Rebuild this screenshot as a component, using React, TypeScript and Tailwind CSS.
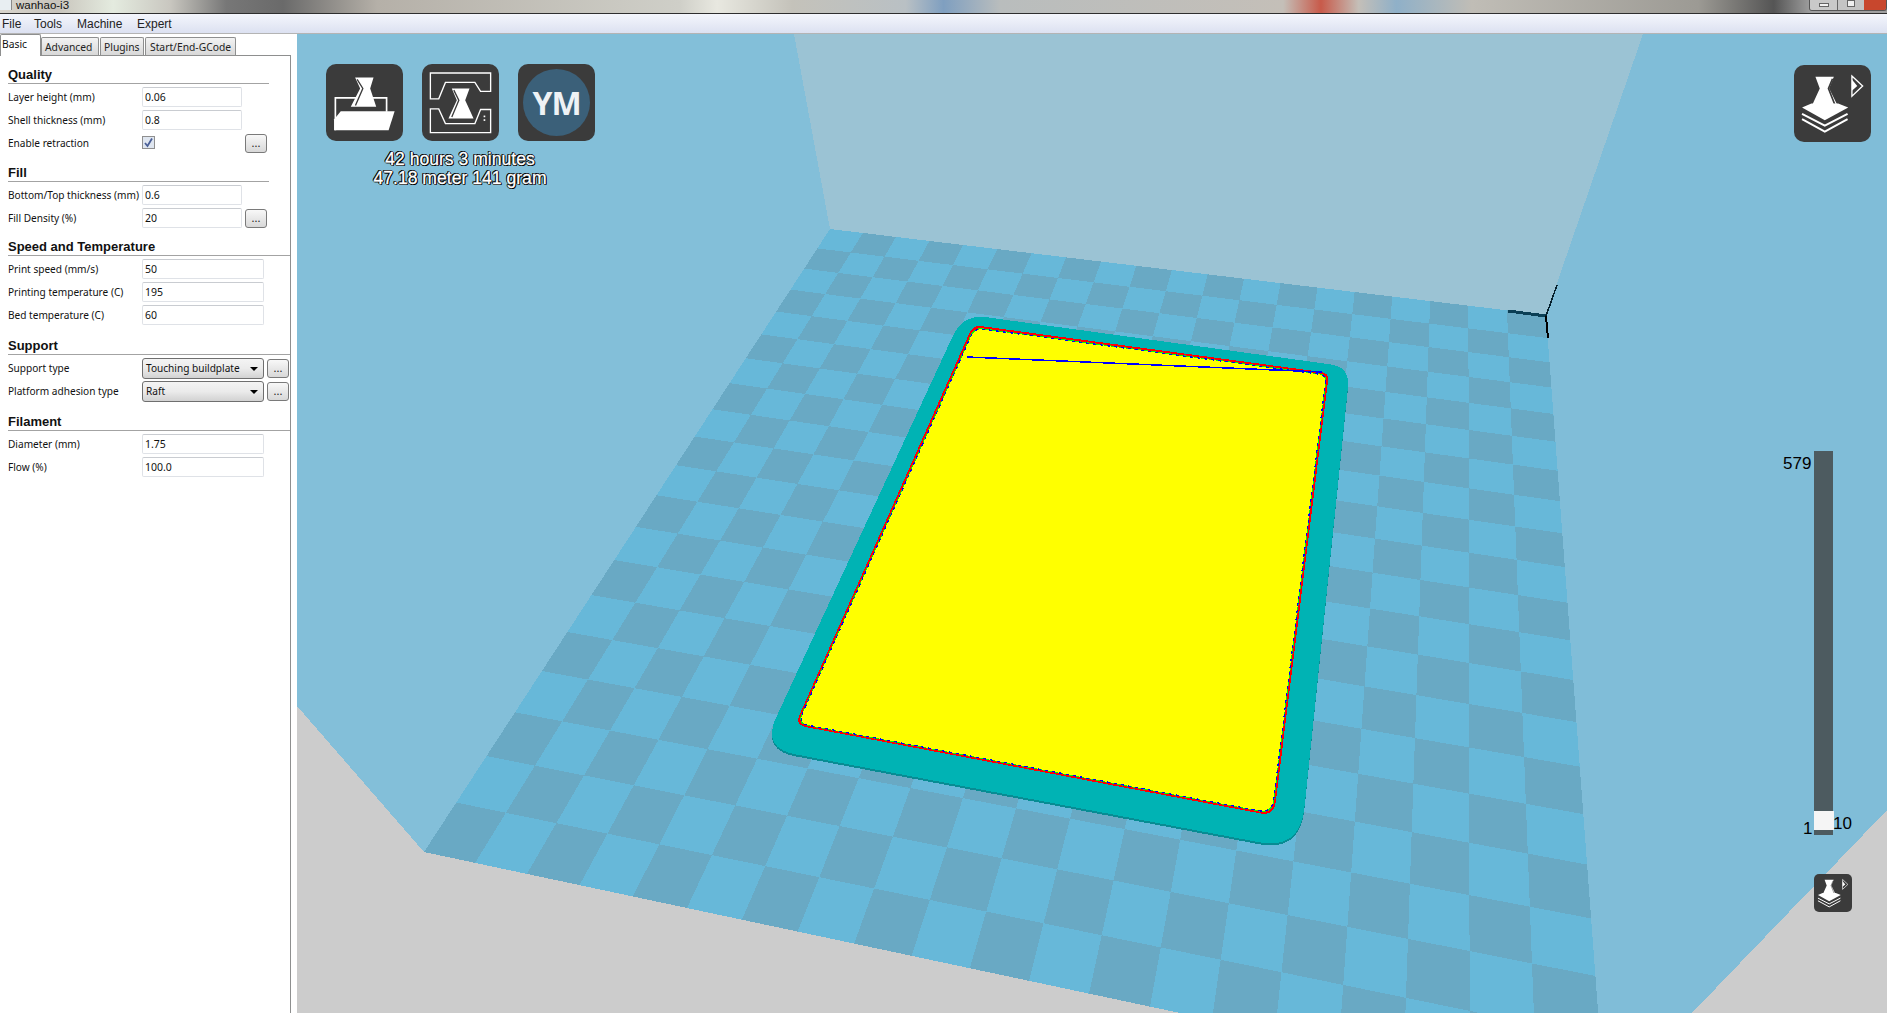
type Pt = [number, number];

// bed corners on screen, in page pixels
const BED: Pt[] = [[830, 229], [1546, 315], [1605, 1104], [424, 852]];

const projector = (q: Pt[]) => {
  const [[x0, y0], [x1, y1], [x2, y2], [x3, y3]] = q;
  const sx = x0 - x1 + x2 - x3;
  const sy = y0 - y1 + y2 - y3;
  const dx1 = x1 - x2;
  const dx2 = x3 - x2;
  const dy1 = y1 - y2;
  const dy2 = y3 - y2;
  const den = dx1 * dy2 - dx2 * dy1;
  const g = (sx * dy2 - dx2 * sy) / den;
  const h = (dx1 * sy - sx * dy1) / den;
  const a = x1 - x0 + g * x1;
  const b = x3 - x0 + h * x3;
  const d = y1 - y0 + g * y1;
  const e = y3 - y0 + h * y3;
  return (u: number, v: number): Pt => {
    const w = g * u + h * v + 1;
    return [(a * u + b * v + x0) / w, (d * u + e * v + y0) / w];
  };
};

const toBed = projector(BED);

const darkCells: string[] = [];
for (let row = 0; row < 20; row++) {
  for (let col = 0; col < 20; col++) {
    if ((row + col) % 2 === 1) {
      const corners = [
        toBed(col / 20, row / 20),
        toBed((col + 1) / 20, row / 20),
        toBed((col + 1) / 20, (row + 1) / 20),
        toBed(col / 20, (row + 1) / 20),
      ];
      darkCells.push(corners.map((p) => p.join(',')).join(' '));
    }
  }
}

const roundedPath = (pts: Pt[], radii: number[]) => {
  let path = '';
  pts.forEach((p, i) => {
    const prev = pts[(i + pts.length - 1) % pts.length];
    const next = pts[(i + 1) % pts.length];
    const r = radii[i];
    const lenA = Math.hypot(prev[0] - p[0], prev[1] - p[1]);
    const lenB = Math.hypot(next[0] - p[0], next[1] - p[1]);
    const a: Pt = [p[0] + ((prev[0] - p[0]) * r) / lenA, p[1] + ((prev[1] - p[1]) * r) / lenA];
    const b: Pt = [p[0] + ((next[0] - p[0]) * r) / lenB, p[1] + ((next[1] - p[1]) * r) / lenB];
    path += `${i === 0 ? 'M' : 'L'}${a[0]} ${a[1]} Q${p[0]} ${p[1]} ${b[0]} ${b[1]} `;
  });
  return path + 'Z';
};

const RAFT = roundedPath([[963, 314], [1350, 367], [1300, 850], [762, 748]], [24, 20, 42, 34]);
const PRINT: Pt[] = [[973, 325], [1329, 373], [1274, 816], [795, 725]];

const inset = (pts: Pt[], px: number): Pt[] => {
  const cx = pts.reduce((s, p) => s + p[0], 0) / pts.length;
  const cy = pts.reduce((s, p) => s + p[1], 0) / pts.length;
  return pts.map(([x, y]) => {
    const len = Math.hypot(x - cx, y - cy);
    return [x + ((cx - x) * px) / len, y + ((cy - y) * px) / len];
  });
};

const printPath = (px: number) => roundedPath(inset(PRINT, px), [9, 8, 14, 11]);

const Scene = () => (
  <svg className="absolute inset-0 w-full h-full" viewBox="297 34 1590 979" shapeRendering="crispEdges">
    <rect x="297" y="34" width="1590" height="979" fill="#80bdd8" />
    <polygon points="297,34 794,34 830,229 424,852 297,706" fill="#83bfd9" />
    <polygon points="794,34 1643,34 1546,315 830,229" fill="#9bc3d4" />
    <polygon points="1692,1013 1887,810 1887,1013" fill="#cccccc" />
    <polygon points={BED.map((p) => p.join(',')).join(' ')} fill="#67b8d9" />
    {darkCells.map((cell, i) => (
      <polygon key={i} points={cell} fill="#69a9c4" />
    ))}
    <polygon points="297,706 424,852 1180,1013 297,1013" fill="#cccccc" />

    <path d={RAFT} fill="#078c93" transform="translate(0 2)" />
    <path d={RAFT} fill="#00b3b4" />
    <path d={printPath(0)} fill="#ff0000" />
    <path d={printPath(2.4)} fill="#00ff00" />
    <path d={printPath(3.6)} fill="#ffff00" />
    <path d={printPath(3.4)} fill="none" stroke="#0000ff" strokeWidth="1.2" strokeDasharray="3 4" />
    <line x1="967" y1="357" x2="1322" y2="372" stroke="#0000ff" strokeWidth="1.5" />

    <line x1="1508" y1="311" x2="1546" y2="316" stroke="#0b3f55" strokeWidth="3" />
    <line x1="1546" y1="316" x2="1557" y2="285" stroke="#06202c" strokeWidth="1.5" />
    <line x1="1546" y1="316" x2="1548" y2="338" stroke="#000000" strokeWidth="2" />
  </svg>
);

const IconBox = ({ children, className }: { children: React.ReactNode; className: string }) => (
  <div className={`absolute bg-[#3b3b3b] ${className}`}>{children}</div>
);

const LoadIcon = () => (
  <svg viewBox="48 42 230 230" className="w-full h-full">
    <path d="M76 240 V143 H229 V185" fill="none" stroke="#fff" strokeWidth="5" />
    <polygon points="135,82 190,82 180,115 198,170 122,170 150,115" fill="#fff" />
    <polyline points="141,88 158,115 136,166" fill="none" stroke="#3b3b3b" strokeWidth="4" />
    <polygon points="72,240 235,240 253,183 92,183 72,208" fill="#fff" />
  </svg>
);

const PrintIcon = () => (
  <svg viewBox="336 42 230 230" className="w-full h-full">
    <polygon points="361,69 541,69 541,124 511,124 494,97 406,97 386,146 361,146" fill="none" stroke="#fff" strokeWidth="4" />
    <polygon points="361,176 386,176 406,220 494,220 511,178 541,178 541,247 361,247" fill="none" stroke="#fff" strokeWidth="4" />
    <polygon points="425,115 478,115 465,150 490,205 415,205 440,150" fill="#fff" />
    <polyline points="431,120 446,150 425,200" fill="none" stroke="#3b3b3b" strokeWidth="4" />
    <rect x="520" y="196" width="5" height="5" fill="#fff" />
    <rect x="520" y="207" width="5" height="5" fill="#fff" />
  </svg>
);

const ViewIcon = ({ thin }: { thin?: boolean }) => (
  <svg viewBox="103 195 230 230" className="w-full h-full">
    <polygon points="167,230 222,230 208,265 235,320 155,320 180,265" fill="#fff" />
    <polyline points="218,236 206,265 226,316" fill="none" stroke="#3b3b3b" strokeWidth={thin ? 3 : 5} />
    <polygon points="127,322 155,310 235,310 265,322 195,360" fill="#fff" />
    <polyline points="127,341 195,376 263,341" fill="none" stroke="#fff" strokeWidth="6" />
    <polyline points="127,357 195,394 263,357" fill="none" stroke="#fff" strokeWidth="6" />
    <polygon points="276,228 308,258 276,288" fill="#3b3b3b" stroke="#fff" strokeWidth="4" />
    <polygon points="276,238 292,258 276,272" fill="#fff" />
  </svg>
);

const Viewport = () => (
  <div className="relative flex-1 overflow-hidden font-['Liberation_Sans',sans-serif]">
    <Scene />
    <IconBox className="left-[29px] top-[30px] w-[77px] h-[77px] rounded-[10px]"><LoadIcon /></IconBox>
    <IconBox className="left-[125px] top-[30px] w-[77px] h-[77px] rounded-[10px]"><PrintIcon /></IconBox>
    <IconBox className="left-[221px] top-[30px] w-[77px] h-[77px] rounded-[10px] flex items-center justify-center">
      <div className="w-[67px] h-[67px] rounded-full bg-[#3b6079] flex items-center justify-center text-[32px] font-bold tracking-[-1px] text-[#eef2f5] font-['Open_Sans',sans-serif]">
        YM
      </div>
    </IconBox>
    <div className="absolute left-[63px] top-[116px] w-[200px] text-center text-[17.6px] leading-[19px] text-white [-webkit-text-stroke:0.3px_#fff] [text-shadow:1px_0_0_#000,-1px_0_0_#000,0_1px_0_#000,0_-1px_0_#000,1px_1px_0_#000,-1px_-1px_0_#000]">
      <div>42 hours 3 minutes</div>
      <div>47.18 meter 141 gram</div>
    </div>
    <IconBox className="left-[1497px] top-[31px] w-[77px] h-[77px] rounded-[10px]"><ViewIcon /></IconBox>

    <div className="absolute left-[1517px] top-[417px] w-[19px] h-[384px] bg-[#4d5b60]">
      <div className="absolute left-0 top-[360px] w-[20px] h-[19px] bg-[#f5f5f5]" />
    </div>
    <div className="absolute left-[1486px] top-[420px] text-[17px] leading-[20px] text-black">579</div>
    <div className="absolute left-[1506px] top-[785px] text-[17px] leading-[20px] text-black">1</div>
    <div className="absolute left-[1536px] top-[780px] text-[17px] leading-[20px] text-black">10</div>
    <IconBox className="left-[1517px] top-[840px] w-[38px] h-[38px] rounded-[5px]"><ViewIcon thin /></IconBox>
  </div>
);

const Field = ({ value, wide }: { value: string; wide?: boolean }) => (
  <div className={`h-[20px] pt-[1px] ${wide ? 'w-[122px]' : 'w-[100px]'} rounded-[2px] border border-[#dfe2e7] border-t-[#c9ccd1] bg-white pl-[2px] flex items-center text-[10.5px] text-[#111]`}>
    {value}
  </div>
);

const Dots = ({ className }: { className: string }) => (
  <div className={`h-[19px] w-[22px] rounded-[3px] border border-[#7a7a7a] bg-gradient-to-b from-[#f8f8f8] to-[#d8d8d8] flex items-center justify-center text-[11px] leading-none pb-[2px] text-[#222] ${className}`}>
    ...
  </div>
);

const Select = ({ value }: { value: string }) => (
  <div className="relative h-[21px] w-[122px] rounded-[3px] border border-[#6f6f6f] bg-gradient-to-b from-[#f4f4f4] via-[#ebebeb] to-[#d2d2d2] pl-[3px] flex items-center text-[10.1px] text-[#111]">
    {value}
    <div className="absolute right-[5px] top-[8px] w-0 h-0 border-x-[4px] border-x-transparent border-t-[4px] border-t-black" />
  </div>
);

const Row = ({ label, children }: { label: string; children: React.ReactNode }) => (
  <div className="flex items-start h-[23px]">
    <div className="w-[134px] h-[20px] pt-[2px] shrink-0 flex items-center whitespace-nowrap text-[10.1px] text-[#111]">{label}</div>
    {children}
  </div>
);

const Section = ({ title, headClass, children }: { title: string; headClass: string; children: React.ReactNode }) => (
  <div>
    <div className={`flex items-end border-b border-[#a3a3a3] text-[13px] leading-[16px] font-bold text-[#111] font-['Liberation_Sans',sans-serif] ${headClass}`}>
      {title}
    </div>
    <div className="pt-[3px]">{children}</div>
  </div>
);

const tabClass = 'h-[18px] rounded-t-[2px] border border-b-0 border-[#8e8f8f] bg-gradient-to-b from-[#f3f3f3] to-[#d8d8d8] text-[10.3px] leading-[18px] text-[#222]';

const SettingsPanel = () => (
  <aside className="w-[297px] shrink-0 bg-white font-['Noto_Sans',sans-serif]">
    <div className="flex items-end h-[21px] relative">
      <div className="relative z-10 -mb-px h-[22px] w-[41px] rounded-t-[2px] border border-b-0 border-[#8e8f8f] bg-white pl-[1px] text-[10.3px] leading-[18px] text-[#111]">Basic</div>
      <div className={`${tabClass} w-[58px] pl-[3px]`}>Advanced</div>
      <div className={`${tabClass} ml-[1px] w-[44px] pl-[3px]`}>Plugins</div>
      <div className={`${tabClass} ml-[1px] w-[91px] pl-[4px]`}>Start/End-GCode</div>
    </div>
    <div className="w-[291px] h-[958px] border-t border-r border-[#8e8f8f] pl-[8px]">
      <Section title="Quality" headClass="h-[28px] w-[261px]">
        <Row label="Layer height (mm)"><Field value="0.06" /></Row>
        <Row label="Shell thickness (mm)"><Field value="0.8" /></Row>
        <Row label="Enable retraction">
          <div className="mt-[3px] w-[13px] h-[13px] border border-[#8f8f8f] bg-[#dfe6f0] flex items-center justify-center">
            <svg viewBox="0 0 11 11" className="w-[11px] h-[11px]">
              <path d="M2 6 L4.5 9 L9 1.5" fill="none" stroke="#4a5f97" strokeWidth="1.8" />
            </svg>
          </div>
          <Dots className="ml-[90px] mt-[1px]" />
        </Row>
      </Section>
      <Section title="Fill" headClass="h-[26px] w-[261px]">
        <Row label="Bottom/Top thickness (mm)"><Field value="0.6" /></Row>
        <Row label="Fill Density (%)"><Field value="20" /><Dots className="ml-[3px] mt-[1px]" /></Row>
      </Section>
      <Section title="Speed and Temperature" headClass="h-[25px] w-[282px]">
        <Row label="Print speed (mm/s)"><Field value="50" wide /></Row>
        <Row label="Printing temperature (C)"><Field value="195" wide /></Row>
        <Row label="Bed temperature (C)"><Field value="60" wide /></Row>
      </Section>
      <Section title="Support" headClass="h-[27px] w-[282px]">
        <Row label="Support type"><Select value="Touching buildplate" /><Dots className="ml-[3px] mt-[1px]" /></Row>
        <Row label="Platform adhesion type"><Select value="Raft" /><Dots className="ml-[3px] mt-[1px]" /></Row>
      </Section>
      <Section title="Filament" headClass="h-[27px] w-[282px]">
        <Row label="Diameter (mm)"><Field value="1.75" wide /></Row>
        <Row label="Flow (%)"><Field value="100.0" wide /></Row>
      </Section>
    </div>
  </aside>
);

const TitleBar = () => (
  <div className="h-[13px] flex items-start border-b border-[#2e2e2e] box-content bg-[linear-gradient(90deg,#d8d4cc_0%,#c8c4bc_3%,#e4ebdf_6%,#c9c7c0_9%,#777_12%,#6a6a6a_15%,#b5b0a8_20%,#cfcfc8_36%,#e8e8e0_38%,#c4c2ba_42%,#b9c0c4_48%,#7f9fc0_50%,#b9bdbd_53%,#c4bfb8_68%,#c85a4a_70%,#c4bfb8_72%,#8fb0c8_74%,#c0bdb6_78%,#9c9a94_90%,#555_94%,#a0a0a0_96%)] font-['Liberation_Sans',sans-serif]">
    <div className="w-[12px] h-[10px] bg-[#e8eef2] border-r border-[#8a8a8a]" />
    <div className="pl-[4px] text-[11.5px] leading-[11px] text-[#111]">wanhao-i3</div>
    <div className="ml-auto flex h-[11px] rounded-b-[3px] border-x border-b border-[#555] overflow-hidden">
      <div className="w-[28px] bg-[#c9c9c9] flex justify-center border-r border-[#666]">
        <div className="mt-[3px] w-[10px] h-[4px] bg-[#f2f2f2] border border-[#666]" />
      </div>
      <div className="w-[26px] bg-[#c4c4c4] flex justify-center">
        <div className="w-[8px] h-[7px] bg-[#efefef] border border-[#666]" />
      </div>
      <div className="w-[22px] bg-[#c8472d]" />
    </div>
  </div>
);

const MenuBar = () => (
  <div className="h-[20px] pt-[1px] flex items-center border-b border-[#b4b4b4] bg-gradient-to-b from-[#f4f6fc] to-[#dce1f1] pl-[2px] font-['Liberation_Sans',sans-serif] text-[12px] text-[#222]">
    <span className="w-[32px]">File</span>
    <span className="w-[43px]">Tools</span>
    <span className="w-[60px]">Machine</span>
    <span>Expert</span>
  </div>
);

export default function App() {
  return (
    <div className="h-[1013px] w-[1887px] overflow-hidden flex flex-col bg-white">
      <TitleBar />
      <MenuBar />
      <div className="flex flex-1 min-h-0">
        <SettingsPanel />
        <Viewport />
      </div>
    </div>
  );
}
